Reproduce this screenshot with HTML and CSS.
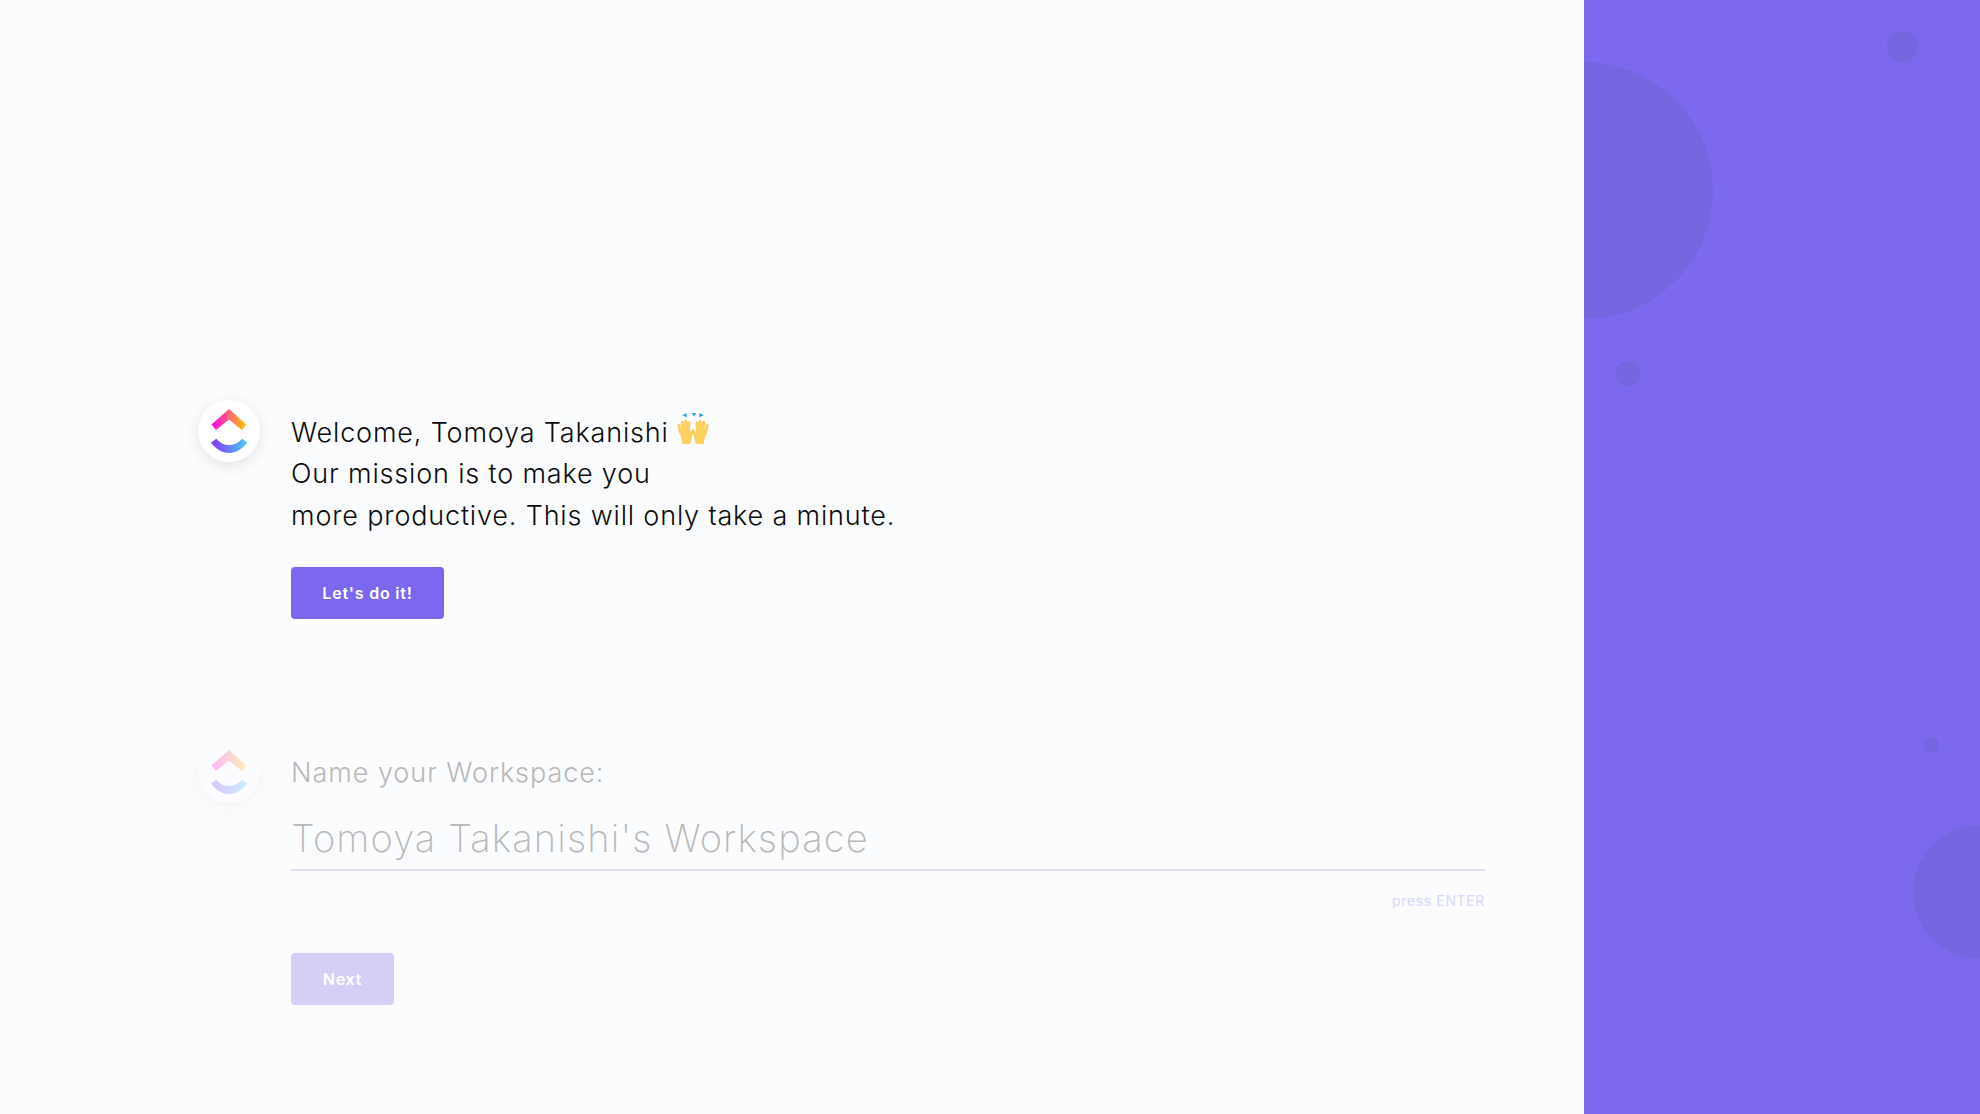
FILE: index.html
```html
<!DOCTYPE html>
<html lang="en">
<head>
<meta charset="utf-8">
<title>Welcome</title>
<link rel="stylesheet" href="styles.css">
</head>
<body>
<main class="main">
  <section class="step">
    <div class="avatar">
      <svg class="logo" viewBox="0 0 62 62" aria-hidden="true">
        <defs>
          <linearGradient id="chev" x1="14" y1="0" x2="48" y2="0" gradientUnits="userSpaceOnUse"><stop offset="0" stop-color="#ff02f0"/><stop offset="1" stop-color="#ffc800"/></linearGradient>
          <linearGradient id="arc" x1="13" y1="0" x2="49" y2="0" gradientUnits="userSpaceOnUse"><stop offset="0" stop-color="#8930fd"/><stop offset="1" stop-color="#49ccf9"/></linearGradient>
        </defs>
        <path fill="url(#chev)" d="M31 9 48.500 24.500 43.800 30 31 19.500 18 30 13.500 24.500Z"/>
        <path fill="url(#arc)" d="M13 42.700 18.300 38.700C22 43 26 45 31 45S40 43 44.300 38.700L49.300 42.700C44 49 38 53 31 53S18 49 13 42.700Z"/>
      </svg>
    </div>
    <div class="body">
      <p class="message">
        <span class="line">Welcome, Tomoya Takanishi<svg class="emoji" viewBox="0 0 30 30" aria-hidden="true">
          <defs>
            <g id="hand">
              <path class="palm" d="M2.400 18.500H12.200L14 23.500 12.200 30H5.200Z"/>
              <path class="finger" d="M1.800 12.500 3.500 20M5 9.500 6 20M8.200 8.700 8.600 20M11.200 10 10.600 20"/>
              <path class="thumb" d="M14.500 18 11.500 24"/>
            </g>
          </defs>
          <path class="spark" d="M9 1v4L5 3zM14 1h4l-2 3.500zM21 1v4l4-2z"/>
          <use href="#hand"/>
          <use href="#hand" transform="translate(30 0) scale(-1 1)"/>
        </svg></span>
        <span class="line">Our mission is to make you</span>
        <span class="line">more productive. This will only take a minute.</span>
      </p>
      <button class="btn btn-primary" type="button">Let's do it!</button>
    </div>
  </section>

  <section class="step step-next">
    <div class="avatar avatar-faded">
      <svg class="logo" viewBox="0 0 62 62" aria-hidden="true">
        <path fill="url(#chev)" d="M31 9 48.500 24.500 43.800 30 31 19.500 18 30 13.500 24.500Z"/>
        <path fill="url(#arc)" d="M13 42.700 18.300 38.700C22 43 26 45 31 45S40 43 44.300 38.700L49.300 42.700C44 49 38 53 31 53S18 49 13 42.700Z"/>
      </svg>
    </div>
    <div class="body">
      <label class="label" for="ws">Name your Workspace:</label>
      <input class="field" id="ws" type="text" placeholder="Tomoya Takanishi's Workspace">
      <div class="hint">press ENTER</div>
      <button class="btn btn-faded" type="button">Next</button>
    </div>
  </section>
</main>
<aside class="panel">
  <span class="dot dot-a"></span>
  <span class="dot dot-b"></span>
  <span class="dot dot-c"></span>
  <span class="dot dot-d"></span>
  <span class="dot dot-e"></span>
</aside>
</body>
</html>
```

FILE: styles.css
```css
* { box-sizing: border-box; }
html, body { height: 100%; }
body {
  margin: 0;
  display: flex;
  height: 1114px;
  overflow: hidden;
  background: #fbfcfe;
  font-family: Inter, "Liberation Sans", sans-serif;
  color: #0c0c0c;
}
.main {
  flex: 1;
  display: flex;
  flex-direction: column;
  justify-content: flex-end;
  gap: 123px;
  padding: 0 99px 109px 198px;
}
.step { display: flex; gap: 31px; }
.avatar {
  flex: none;
  width: 62px;
  height: 62px;
  border-radius: 50%;
  background: #fff;
  box-shadow: 0 4px 14px rgba(0, 0, 0, .1);
}
.avatar-faded { margin-top: -1px; opacity: .28; }
.logo { display: block; width: 62px; height: 62px; }
.body { flex: 1; min-width: 0; display: flex; flex-direction: column; align-items: flex-start; }
.message {
  margin: 12px 0 31px;
  font-size: 27px;
  font-weight: 350;
  line-height: 41.500px;
  letter-spacing: .83px;
}
.line { display: flex; align-items: center; }
.emoji { flex: none; width: 32px; height: 32px; margin: -8px 0 0 8px; }
.spark { fill: #2a9df4; }
.palm { fill: #fdd05f; }
.finger { fill: none; stroke: #fdd05f; stroke-width: 2.800px; stroke-linecap: round; }
.thumb { fill: none; stroke: #fdd05f; stroke-width: 3px; stroke-linecap: round; }
.btn {
  height: 52px;
  border: 0;
  border-radius: 4px;
  color: #fff;
  font: 600 16px Inter, "Liberation Sans", sans-serif;
  letter-spacing: .8px;
}
.btn-primary { width: 153px; background: #7b68ee; }
.btn-faded { width: 103px; margin-top: 42px; background: #d5cff8; }
.label {
  margin-top: 10px;
  height: 41px;
  font-size: 27px;
  font-weight: 350;
  line-height: 41px;
  letter-spacing: .95px;
  color: #b8b8b8;
}
.field {
  width: 100%;
  height: 78px;
  padding: 14px 0 0;
  border: 0;
  border-bottom: 2px solid #e3dffb;
  background: transparent;
  font: 250 38px Inter, "Liberation Sans", sans-serif;
  letter-spacing: 1.140px;
  outline: none;
}
.field::placeholder { color: #b8b8b8; opacity: 1; }
.hint {
  align-self: flex-end;
  margin-top: 20px;
  font-size: 14px;
  line-height: 20px;
  letter-spacing: .65px;
  color: #d9d5fb;
}
.panel {
  flex: none;
  position: relative;
  width: 396px;
  overflow: hidden;
  background: #7d69ed;
}
.dot { position: absolute; border-radius: 50%; background: #7566e0; }
.dot-a { left: -128px; top: 62px; width: 257px; height: 257px; }
.dot-b { left: 303px; top: 31px; width: 31px; height: 31px; }
.dot-c { left: 31px; top: 361px; width: 26px; height: 26px; }
.dot-d { left: 339px; top: 737px; width: 16px; height: 16px; }
.dot-e { left: 329px; top: 825px; width: 134px; height: 134px; }
```
